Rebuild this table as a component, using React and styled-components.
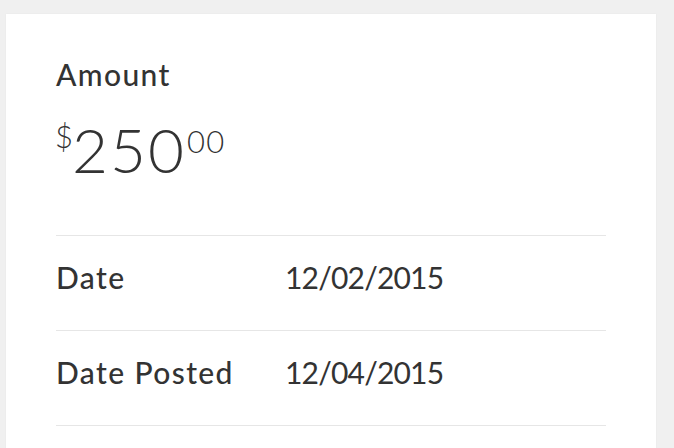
import React from "react";
import styled, { createGlobalStyle } from "styled-components";

const Global = createGlobalStyle`
  html, body { margin: 0; padding: 0; background: #f0f0f0; }
  body { font-family: Lato, "Open Sans", sans-serif; color: #333; }
`;

const Page = styled.div`
  padding: 14px 18px 0 6px;
  height: 448px;
  box-sizing: border-box;
  overflow: hidden;
`;

const Card = styled.div`
  background: #fff;
  min-height: 440px;
  padding: 42px 50px 0;
  box-shadow: 0 0 2px rgba(0, 0, 0, 0.04);
`;

const AmountSection = styled.section`
  padding-bottom: 55px;
`;

const Label = styled.div`
  font-size: 30px;
  line-height: 36px;
  font-weight: 500;
  letter-spacing: 1.4px;
  color: #333;
`;

const AmountValue = styled.div`
  display: flex;
  align-items: flex-start;
  margin-top: 26px;
  font-weight: 300;
  color: #333;
`;

const Sup = styled.span`
  font-size: 31px;
  line-height: 1;
  letter-spacing: ${(p) => p.$spacing}px;
  margin-top: ${(p) => p.$offset}px;
  margin-left: ${(p) => p.$left}px;
  margin-right: ${(p) => p.$right}px;
`;

const Main = styled.span`
  font-size: 62px;
  line-height: 1;
  letter-spacing: 2px;
`;

const Rows = styled.div`
  border-bottom: 1px solid #e6e6e6;
`;

const Row = styled.div`
  display: flex;
  align-items: baseline;
  border-top: 1px solid #e6e6e6;
  padding: 23px 0 35px;
  font-size: 30px;
  line-height: 36px;
`;

const RowLabel = styled.span`
  width: 229px;
  flex: none;
  font-weight: 500;
  letter-spacing: 1.4px;
`;

const RowValue = styled.span`
  font-weight: 400;
  letter-spacing: -0.8px;
`;

export default function App() {
  return (
    <>
      <Global />
      <Page>
        <Card>
          <AmountSection>
            <Label>Amount</Label>
            <AmountValue>
              <Sup $offset={3} $spacing={0} $left={-1} $right={-1}>$</Sup>
              <Main>250</Main>
              <Sup $offset={8} $spacing={1.5} $left={1} $right={0}>00</Sup>
            </AmountValue>
          </AmountSection>
          <Rows>
            <Row>
              <RowLabel>Date</RowLabel>
              <RowValue>12/02/2015</RowValue>
            </Row>
            <Row>
              <RowLabel>Date Posted</RowLabel>
              <RowValue>12/04/2015</RowValue>
            </Row>
          </Rows>
        </Card>
      </Page>
    </>
  );
}
